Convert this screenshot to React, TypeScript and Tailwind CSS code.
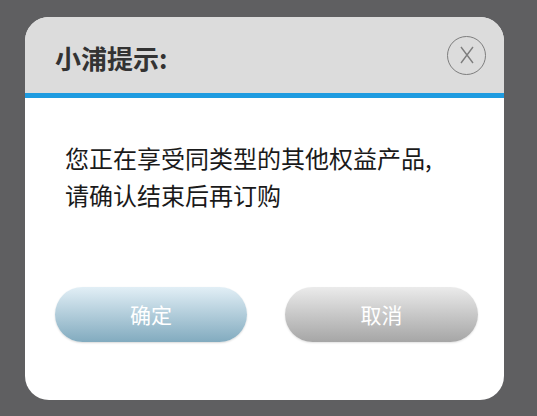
import React from "react";

export default function App() {
  const font = { fontFamily: '"Noto Sans CJK SC", "Noto Sans", sans-serif' };
  return (
    <div className="w-[537px] h-[416px] bg-[#5f5f61] pt-[17px] pl-[25px]" style={font}>
      <div className="w-[479px] h-[383px] rounded-[24px] overflow-hidden bg-white flex flex-col">
        <div className="h-[76px] bg-[#dcdcdc] flex items-center justify-between pl-[30px] pr-[18px]">
          <div className="text-[26px] font-bold text-[#333333] leading-none mt-[6px]">小浦提示:</div>
          <div className="w-[39px] h-[39px] rounded-full border-[1.5px] border-[#7d7d7d] flex items-center justify-center">
            <svg width="18" height="20" viewBox="0 0 18 20">
              <path d="M3 2 L15 18 M15 2 L3 18" stroke="#7d7d7d" strokeWidth="1.4" fill="none" />
            </svg>
          </div>
        </div>
        <div className="h-[5px] bg-[#1e9be0]" />
        <div className="flex flex-col pt-[41px] pl-[40px]">
          <div className="text-[24px] leading-[37px] text-[#1a1a1a]">
            <div>您正在享受同类型的其他权益产品,</div>
            <div>请确认结束后再订购</div>
          </div>
          <div className="flex gap-[38px] mt-[74px] -ml-[10px]">
            <div className="w-[192px] h-[55px] rounded-full bg-gradient-to-b from-[#e2eff6] to-[#82abbf] shadow-[0_1px_2px_rgba(0,0,0,0.15)] flex items-center justify-center text-white text-[21px]">
              确定
            </div>
            <div className="w-[193px] h-[55px] rounded-full bg-gradient-to-b from-[#ebebeb] to-[#a6a6a6] shadow-[0_1px_2px_rgba(0,0,0,0.12)] flex items-center justify-center text-white text-[21px]">
              取消
            </div>
          </div>
        </div>
      </div>
    </div>
  );
}
